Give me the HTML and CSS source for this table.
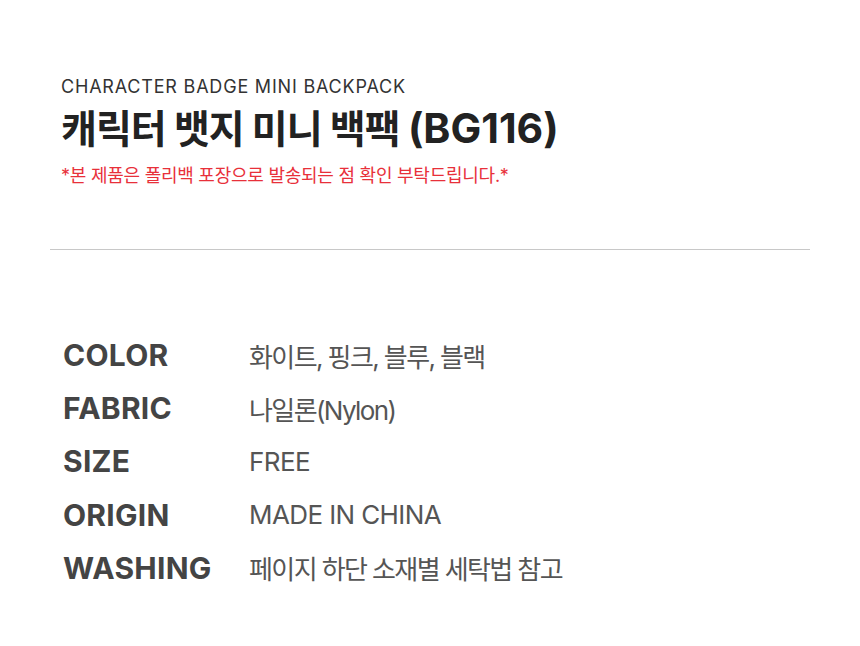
FILE: index.html
```html
<!DOCTYPE html>
<html lang="ko">
<head>
<meta charset="utf-8">
<link rel="stylesheet" href="styles.css">
</head>
<body>
<div class="page">
  <header class="head">
    <p class="sub">CHARACTER BADGE MINI BACKPACK</p>
    <h1 class="title">캐릭터 뱃지 미니 백팩 <span class="en">(BG116)</span></h1>
    <p class="note">*본 제품은 폴리백 포장으로 발송되는 점 확인 부탁드립니다.*</p>
  </header>
  <hr class="divider">
  <dl class="specs">
    <div class="row"><dt>COLOR</dt><dd>화이트, 핑크, 블루, 블랙</dd></div>
    <div class="row"><dt>FABRIC</dt><dd>나일론(Nylon)</dd></div>
    <div class="row"><dt>SIZE</dt><dd class="en">FREE</dd></div>
    <div class="row"><dt>ORIGIN</dt><dd class="en">MADE IN CHINA</dd></div>
    <div class="row"><dt>WASHING</dt><dd>페이지 하단 소재별 세탁법 참고</dd></div>
  </dl>
</div>
</body>
</html>
```

FILE: styles.css
```css
* { box-sizing: border-box; }
html, body { margin: 0; padding: 0; background: #fff; }
body { font-family: Inter, "Noto Sans CJK KR", "Noto Sans", sans-serif; }
.page { width: 860px; height: 646px; padding: 0 50px; }
.head { padding: 74px 0 0 11px; }
.sub { margin: 0; font-size: 18px; line-height: 26px; color: #333; font-weight: 400; letter-spacing: 0.8px; }
.title { margin: 4px 0 0; font-size: 39px; line-height: 48px; height: 48px; font-weight: 700; color: #222; letter-spacing: -1px; white-space: nowrap; }
.title .en { font-size: 41px; letter-spacing: 0; }
.note { margin: 12px 0 0; font-size: 18px; line-height: 24px; color: #e8303a; letter-spacing: -0.25px; }
.divider { margin: 61px 0 0; border: 0; border-top: 1px solid #c8c8c8; height: 0; }
.specs { margin: 87px 0 0; padding-left: 13px; display: flex; flex-direction: column; gap: 16.6px; }
.row { display: flex; align-items: center; height: 36.5px; }
.row dt { width: 186px; font-size: 30px; font-weight: 700; color: #444; letter-spacing: 0.25px; }
.row dd { margin: 0; font-size: 26px; color: #555; letter-spacing: -1.6px; }
.row dd.en { letter-spacing: -0.6px; }
```
